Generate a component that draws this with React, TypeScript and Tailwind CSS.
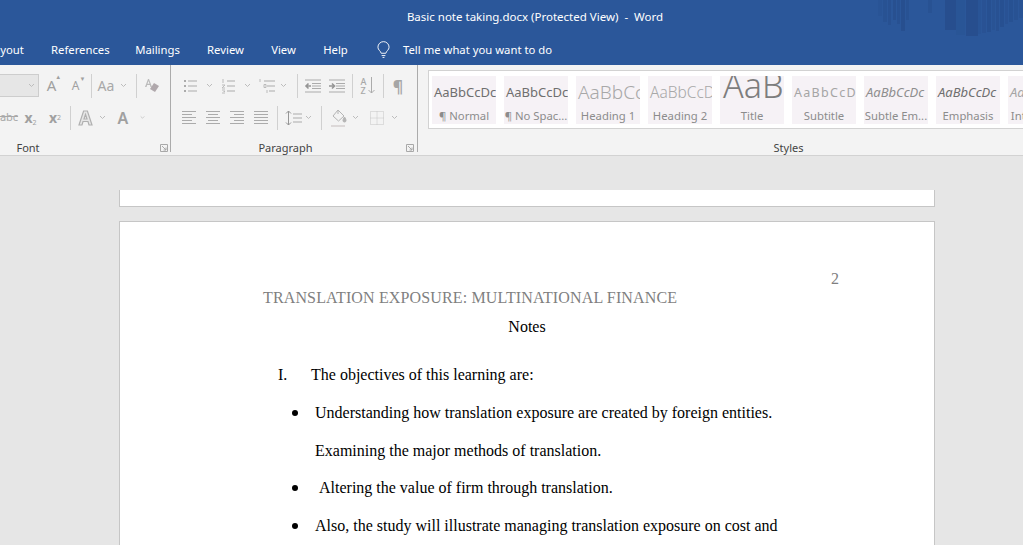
import React from "react";

const G = "#ababab";

function Svg({ w, h = 16, children }: { w: number; h?: number; children: React.ReactNode }) {
  return (
    <svg width={w} height={h} viewBox={`0 0 ${w} ${h}`} fill="none" stroke={G} strokeWidth="1" className="block shrink-0">
      {children}
    </svg>
  );
}

function Cell({ c, children }: { c: string; children?: React.ReactNode }) {
  return <div className={`flex h-full shrink-0 items-center justify-center ${c}`}>{children}</div>;
}

const Chev = () => (
  <svg width="7" height="5" viewBox="0 0 7 5" fill="none" stroke="#bcbcbc" strokeWidth="1" className="block">
    <path d="M1 1l2.5 2.5L6 1" />
  </svg>
);

const Sep = () => <div className="h-[24px] w-px shrink-0 bg-[#d0d0d0]" />;

const Bullets = () => (
  <Svg w={14}>
    <path d="M5 3h9M5 8h9M5 13h9" />
    <path d="M1 2h2v2H1zM1 7h2v2H1zM1 12h2v2H1z" fill={G} stroke="none" />
  </Svg>
);
const Numbered = () => (
  <Svg w={14}>
    <path d="M6 3h8M6 8h8M6 13h8" />
    <path d="M2 1v4M1 7h3L1 10h3M1 12h3M1 15h3M2.5 13.5H4" stroke="#bbb" />
  </Svg>
);
const Multi = () => (
  <Svg w={16}>
    <path d="M5 3h11M8 8h8M10 13h6" />
    <path d="M1 1v3M5 6.500h2v3H5zM8 12v3" stroke="#bbb" />
  </Svg>
);
const Outdent = ({ flip }: { flip?: boolean }) => (
  <Svg w={17} h={14}>
    <path d="M1 1h16M8 4.500h9M8 7h9M8 9.500h9M1 13h16" />
    {flip ? (
      <path d="M1 7h5M4 4.500L6.500 7 4 9.500" stroke="#959595" strokeWidth="1.6" />
    ) : (
      <path d="M7 7H2M4.500 4.500L2 7l2.500 2.500" stroke="#959595" strokeWidth="1.6" />
    )}
  </Svg>
);
const Align = ({ kind }: { kind: "l" | "c" | "r" | "j" }) => {
  const d = {
    l: "M0 1.500h14M0 4.500h10M0 7.500h14M0 10.500h10M0 13.500h14",
    c: "M0 1.500h14M2 4.500h10M0 7.500h14M2 10.500h10M0 13.500h14",
    r: "M0 1.500h14M4 4.500h10M0 7.500h14M4 10.500h10M0 13.500h14",
    j: "M0 1.500h14M0 4.500h14M0 7.500h14M0 10.500h14M0 13.500h14",
  }[kind];
  return (
    <Svg w={14} h={15}>
      <path d={d} />
    </Svg>
  );
};

function Row({ children, className = "" }: { children: React.ReactNode; className?: string }) {
  return <div className={`flex h-[31px] shrink-0 items-center ${className}`}>{children}</div>;
}

function Launcher() {
  return (
    <svg width="8" height="8" viewBox="0 0 8 8" fill="none" stroke="#a8a8a8" strokeWidth="1" className="block">
      <path d="M.5 7.500v-7h7v7zM2 2l4 4M6 3.500V6H3.500" />
    </svg>
  );
}

const styleItems = [
  { p: "AaBbCcDc", l: "¶ Normal", c: "mt-[2px] text-[13px] text-[#6f6f6f]" },
  { p: "AaBbCcDc", l: "¶ No Spac...", c: "mt-[2px] text-[13px] text-[#6f6f6f]" },
  { p: "AaBbCc", l: "Heading 1", c: "mt-[1px] text-[19px] text-[#a8a8a8] font-light" },
  { p: "AaBbCcD", l: "Heading 2", c: "mt-[1px] text-[15.5px] text-[#a8a8a8] font-light" },
  { p: "AaB", l: "Title", c: "text-[34px] text-[#7d7d7d] font-light mt-[-13px] pl-[1px]" },
  { p: "AaBbCcD", l: "Subtitle", c: "mt-[2px] text-[12.5px] text-[#a5a5a5] tracking-[1.3px]" },
  { p: "AaBbCcDc", l: "Subtle Em...", c: "mt-[2px] text-[13px] text-[#8e8e8e] italic" },
  { p: "AaBbCcDc", l: "Emphasis", c: "mt-[2px] text-[13px] text-[#6f6f6f] italic" },
  { p: "AaBbCcDc", l: "Intense E...", c: "mt-[2px] text-[13px] text-[#a5a5a5] italic" },
];

const tabs = [
  { t: "References", c: "w-[57px]" },
  { t: "Mailings", c: "w-[45px]" },
  { t: "Review", c: "w-[37px]" },
  { t: "View", c: "w-[25px]" },
  { t: "Help", c: "w-[25px]" },
];

const bars: [number, number, number, number][] = [
  [878, 4, 16, 0.1], [883, 4, 22, 0.2], [888, 3, 25, 0.22], [893, 3, 20, 0.28], [897, 3, 24, 0.22], [901, 4, 31, 0.3], [906, 3, 20, 0.2],
  [928, 4, 13, 0.2], [945, 11, 30, 0.35], [956, 9, 35, 0.08], [966, 12, 36, 0.35], [978, 3, 34, 0.1], [982, 4, 33, 0.18], [987, 4, 32, 0.26],
  [992, 3, 30, 0.16], [996, 3, 31, 0.22], [1000, 4, 27, 0.26], [1005, 3, 24, 0.18], [1009, 4, 22, 0.24], [1014, 4, 20, 0.2], [1019, 4, 18, 0.16],
];

function Li({ children, plain, indent }: { children: React.ReactNode; plain?: boolean; indent?: boolean }) {
  return (
    <li className="flex h-[37.7px] items-center whitespace-nowrap">
      <span className="flex w-[26px] shrink-0 justify-start pl-[3px]">
        {!plain && <span className="h-[6px] w-[6px] rounded-full bg-black" />}
      </span>
      <span className={indent ? "pl-[4px]" : ""}>{children}</span>
    </li>
  );
}

export default function App() {
  return (
    <div className="flex h-[545px] w-full flex-col overflow-hidden bg-[#e6e6e6] font-['Noto_Sans',sans-serif]">
      {/* title + tabs */}
      <div className="relative h-[65px] shrink-0 bg-[#2b579a] text-white">
        <svg className="absolute left-0 top-0" width="1023" height="40" viewBox="0 0 1023 40">
          {bars.map(([x, w, h, o]) => (
            <rect key={x} x={x} y="0" width={w} height={h} fill="#1f3f78" opacity={o} />
          ))}
        </svg>
        <div className="relative flex h-[33px] items-center justify-center pl-[47px] text-[11.5px]">
          <span className="whitespace-pre">Basic note taking.docx (Protected View)  -  Word</span>
        </div>
        <div className="relative flex h-[32px] items-center gap-[27px] pt-[2px] text-[11.3px]">
          <span className="-ml-[12px] w-[36px] whitespace-nowrap">Layout</span>
          {tabs.map((t) => (
            <span key={t.t} className={`whitespace-nowrap text-center ${t.c}`}>
              {t.t}
            </span>
          ))}
          <div className="ml-[2px] flex items-center gap-[13px]">
            <svg width="13" height="18" viewBox="0 0 14 18" fill="none" stroke="#fff" strokeWidth="1" className="block">
              <path d="M4.500 12.500C4 10 1 9 1 6a6 6 0 0 1 12 0c0 3-3 4-3.500 6.500zM5 15h4M6 17h2" />
            </svg>
            <span className="whitespace-nowrap">Tell me what you want to do</span>
          </div>
        </div>
      </div>

      {/* ribbon */}
      <div className="flex h-[91px] shrink-0 border-b border-[#d2d2d2] bg-[#f3f3f3]">
        {/* Font */}
        <div className="flex h-[87px] w-[171px] shrink-0 flex-col border-r border-[#ababab] pt-[5px]">
          <Row>
            <div className="-ml-[2px] flex h-[23px] w-[41px] shrink-0 items-center justify-end border border-[#cdcdcd] bg-[#e6e6e6] pr-[3px]">
              <Chev />
            </div>
            <Cell c="w-[25px]">
              <span className="relative text-[15px] text-[#a0a0a0]">A<span className="absolute -right-[5px] -top-[1px] text-[6px]">▲</span></span>
            </Cell>
            <Cell c="w-[23px]">
              <span className="relative text-[12px] text-[#a0a0a0]">A<span className="absolute -right-[6px] -top-[2px] text-[6px]">▼</span></span>
            </Cell>
            <Cell c="w-[8px]"><Sep /></Cell>
            <Cell c="w-[22px]"><span className="text-[14px] text-[#a8a8a8]">Aa</span></Cell>
            <Cell c="w-[12px]"><Chev /></Cell>
            <Cell c="w-[14px]"><Sep /></Cell>
            <Cell c="w-[18px]">
              <svg width="16" height="16" viewBox="0 0 16 16" className="block">
                <path d="M4 1l-3 8h1.500l.6-2h2.800l.6 2H8L5 1zM3.500 5.800L4.500 3l1 2.800z" fill="#bbb" />
                <path d="M10 5l5 3-4 6-5-3z" fill="#b0a8ac" />
              </svg>
            </Cell>
          </Row>
          <Row className="mt-[1px]">
            <Cell c="w-[18px]"><span className="text-[11px] text-[#a8a8a8] line-through">abc</span></Cell>
            <Cell c="w-[25px]">
              <span className="text-[14px] font-bold text-[#a0a0a0]">x<sub className="text-[7px] font-normal">2</sub></span>
            </Cell>
            <Cell c="w-[24px]">
              <span className="text-[14px] font-bold text-[#a0a0a0]">x<sup className="text-[7px] font-normal">2</sup></span>
            </Cell>
            <Cell c="w-[6px]"><Sep /></Cell>
            <Cell c="w-[25px]">
              <svg width="15" height="16" viewBox="0 0 15 16" fill="#e6e6e6" stroke="#b0b0b0" strokeWidth="1.2" className="block">
                <path d="M5.600 1h3.800L14 15h-3l-1-3.500H5L4 15H1zM6 9h3L7.500 4.500z" />
              </svg>
            </Cell>
            <Cell c="w-[8px]"><Chev /></Cell>
            <Cell c="w-[34px]"><span className="text-[16px] font-semibold text-[#a0a0a0]">A</span></Cell>
            <Cell c="w-[5px]"><Chev /></Cell>
          </Row>
          <div className="relative mt-[8px] flex h-[14px] shrink-0 items-center justify-center pr-[114px] text-[11px] text-[#444]">
            Font
            <div className="absolute left-[160px] top-[3px]"><Launcher /></div>
          </div>
        </div>

        {/* Paragraph */}
        <div className="flex h-[87px] w-[247px] shrink-0 flex-col border-r border-[#ababab] pt-[5px]">
          <Row className="pl-[11px]">
            <Cell c="w-[15px]"><Bullets /></Cell>
            <Cell c="w-[24px]"><Chev /></Cell>
            <Cell c="w-[14px]"><Numbered /></Cell>
            <Cell c="w-[24px]"><Chev /></Cell>
            <Cell c="w-[16px]"><Multi /></Cell>
            <Cell c="w-[16px]"><Chev /></Cell>
            <Cell c="w-[13px]"><Sep /></Cell>
            <Cell c="w-[17px]"><Outdent /></Cell>
            <Cell c="w-[7px]" />
            <Cell c="w-[17px]"><Outdent flip /></Cell>
            <Cell c="w-[14px]"><Sep /></Cell>
            <Cell c="w-[18px]">
              <div className="flex items-center gap-[2px]">
                <span className="flex flex-col text-[9px] font-medium leading-[9px] text-[#a8a8a8]"><span>A</span><span>Z</span></span>
                <svg width="7" height="17" viewBox="0 0 7 17" fill="none" stroke={G} className="block"><path d="M3.500 0v16M.5 13l3 3 3-3" /></svg>
              </div>
            </Cell>
            <Cell c="w-[12px]"><Sep /></Cell>
            <Cell c="w-[18px]"><span className="text-[16px] font-bold text-[#a6a6a6]">¶</span></Cell>
          </Row>
          <Row className="mt-[1px] pl-[11px]">
            <Cell c="w-[14px]"><Align kind="l" /></Cell>
            <Cell c="w-[10px]" />
            <Cell c="w-[14px]"><Align kind="c" /></Cell>
            <Cell c="w-[10px]" />
            <Cell c="w-[14px]"><Align kind="r" /></Cell>
            <Cell c="w-[10px]" />
            <Cell c="w-[14px]"><Align kind="j" /></Cell>
            <Cell c="w-[9px]" />
            <Cell c="w-[1px]"><Sep /></Cell>
            <Cell c="w-[6px]" />
            <Cell c="w-[18px]">
              <Svg w={17}>
                <path d="M8 4h9M8 8h9M8 12h9" />
                <path d="M3.500 1v14M1 3.500L3.500 1 6 3.500M1 12.500L3.500 15 6 12.500" stroke="#959595" />
              </Svg>
            </Cell>
            <Cell c="w-[13px]"><Chev /></Cell>
            <Cell c="w-[13px]"><Sep /></Cell>
            <Cell c="w-[21px]">
              <svg width="16" height="18" viewBox="0 0 16 18" fill="none" stroke="#b4b4b4" className="block">
                <path d="M7 1l6 6-5.500 5L2 7zM7 1v4" />
                <path d="M13.500 8c1 1.500 1.500 2.500 1.500 3.500a1.200 1.200 0 0 1-3 0c0-1 .5-2 1.500-3.500z" fill="#b4b4b4" />
                <path d="M0 17h14" stroke="#dcd8d8" strokeWidth="2" />
              </svg>
            </Cell>
            <Cell c="w-[13px]"><Chev /></Cell>
            <Cell c="w-[7px]" />
            <Cell c="w-[15px]">
              <svg width="14" height="14" viewBox="0 0 14 14" fill="none" stroke="#c4c4c4" strokeDasharray="1 1" className="block">
                <path d="M.5.5h13v13H.500zM7 .5v13M.5 7h13" />
              </svg>
            </Cell>
            <Cell c="w-[21px]"><Chev /></Cell>
          </Row>
          <div className="relative mt-[8px] flex h-[14px] shrink-0 items-center justify-center pr-[17px] text-[11px] text-[#444]">
            Paragraph
            <div className="absolute left-[235px] top-[3px]"><Launcher /></div>
          </div>
        </div>

        {/* Styles */}
        <div className="flex h-[87px] min-w-0 flex-1 flex-col pl-[10px] pt-[5px]">
          <div className="flex h-[59px] w-[640px] shrink-0 gap-[8px] overflow-hidden border border-r-0 border-[#d2d2d2] bg-white pl-[3px] pt-[5px]">
            {styleItems.map((s) => (
              <div key={s.l} className="flex h-[48px] w-[64px] shrink-0 flex-col items-center overflow-hidden bg-[#f6f2f6]">
                <div className="flex h-[32px] w-full shrink-0 items-center overflow-hidden whitespace-nowrap pl-[2px]">
                  <span className={s.c}>{s.p}</span>
                </div>
                <div className="whitespace-nowrap text-[11.3px] leading-[16px] text-[#8c8c8c]">{s.l}</div>
              </div>
            ))}
          </div>
          <div className="mt-[12px] flex h-[14px] shrink-0 items-center justify-center pl-[126px] text-[11px] text-[#444]">
            Styles
          </div>
        </div>
      </div>

      {/* document */}
      <div className="flex min-h-0 flex-1 flex-col pl-[119px] pt-[34px] font-['Liberation_Serif',serif] text-[16px] text-black">
        <div className="h-[17px] w-[816px] shrink-0 border-x border-b border-[#c6c6c6] bg-white" />
        <div className="mt-[14px] w-[816px] flex-1 shrink-0 border border-[#c6c6c6] bg-white pl-[143px] pt-[48px]">
          <div className="flex h-[18px] justify-end pr-[95px] leading-[18px] text-[#7f7f7f]">2</div>
          <div className="mt-[1px] h-[18px] whitespace-nowrap leading-[18px] tracking-[0.14px] text-[#7f7f7f]">TRANSLATION EXPOSURE: MULTINATIONAL FINANCE</div>
          <div className="mt-[11px] h-[18px] pr-[143px] text-center leading-[18px]">Notes</div>
          <div className="mt-[20px] flex h-[38px] items-center pl-[15px]">
            <span className="w-[33px]">I.</span>
            <span>The objectives of this learning are:</span>
          </div>
          <ul className="pl-[26px]">
            <Li>Understanding how translation exposure are created by foreign entities.</Li>
            <Li plain>Examining the major methods of translation.</Li>
            <Li indent>Altering the value of firm through translation.</Li>
            <Li>Also, the study will illustrate managing translation exposure on cost and</Li>
          </ul>
        </div>
      </div>
    </div>
  );
}
